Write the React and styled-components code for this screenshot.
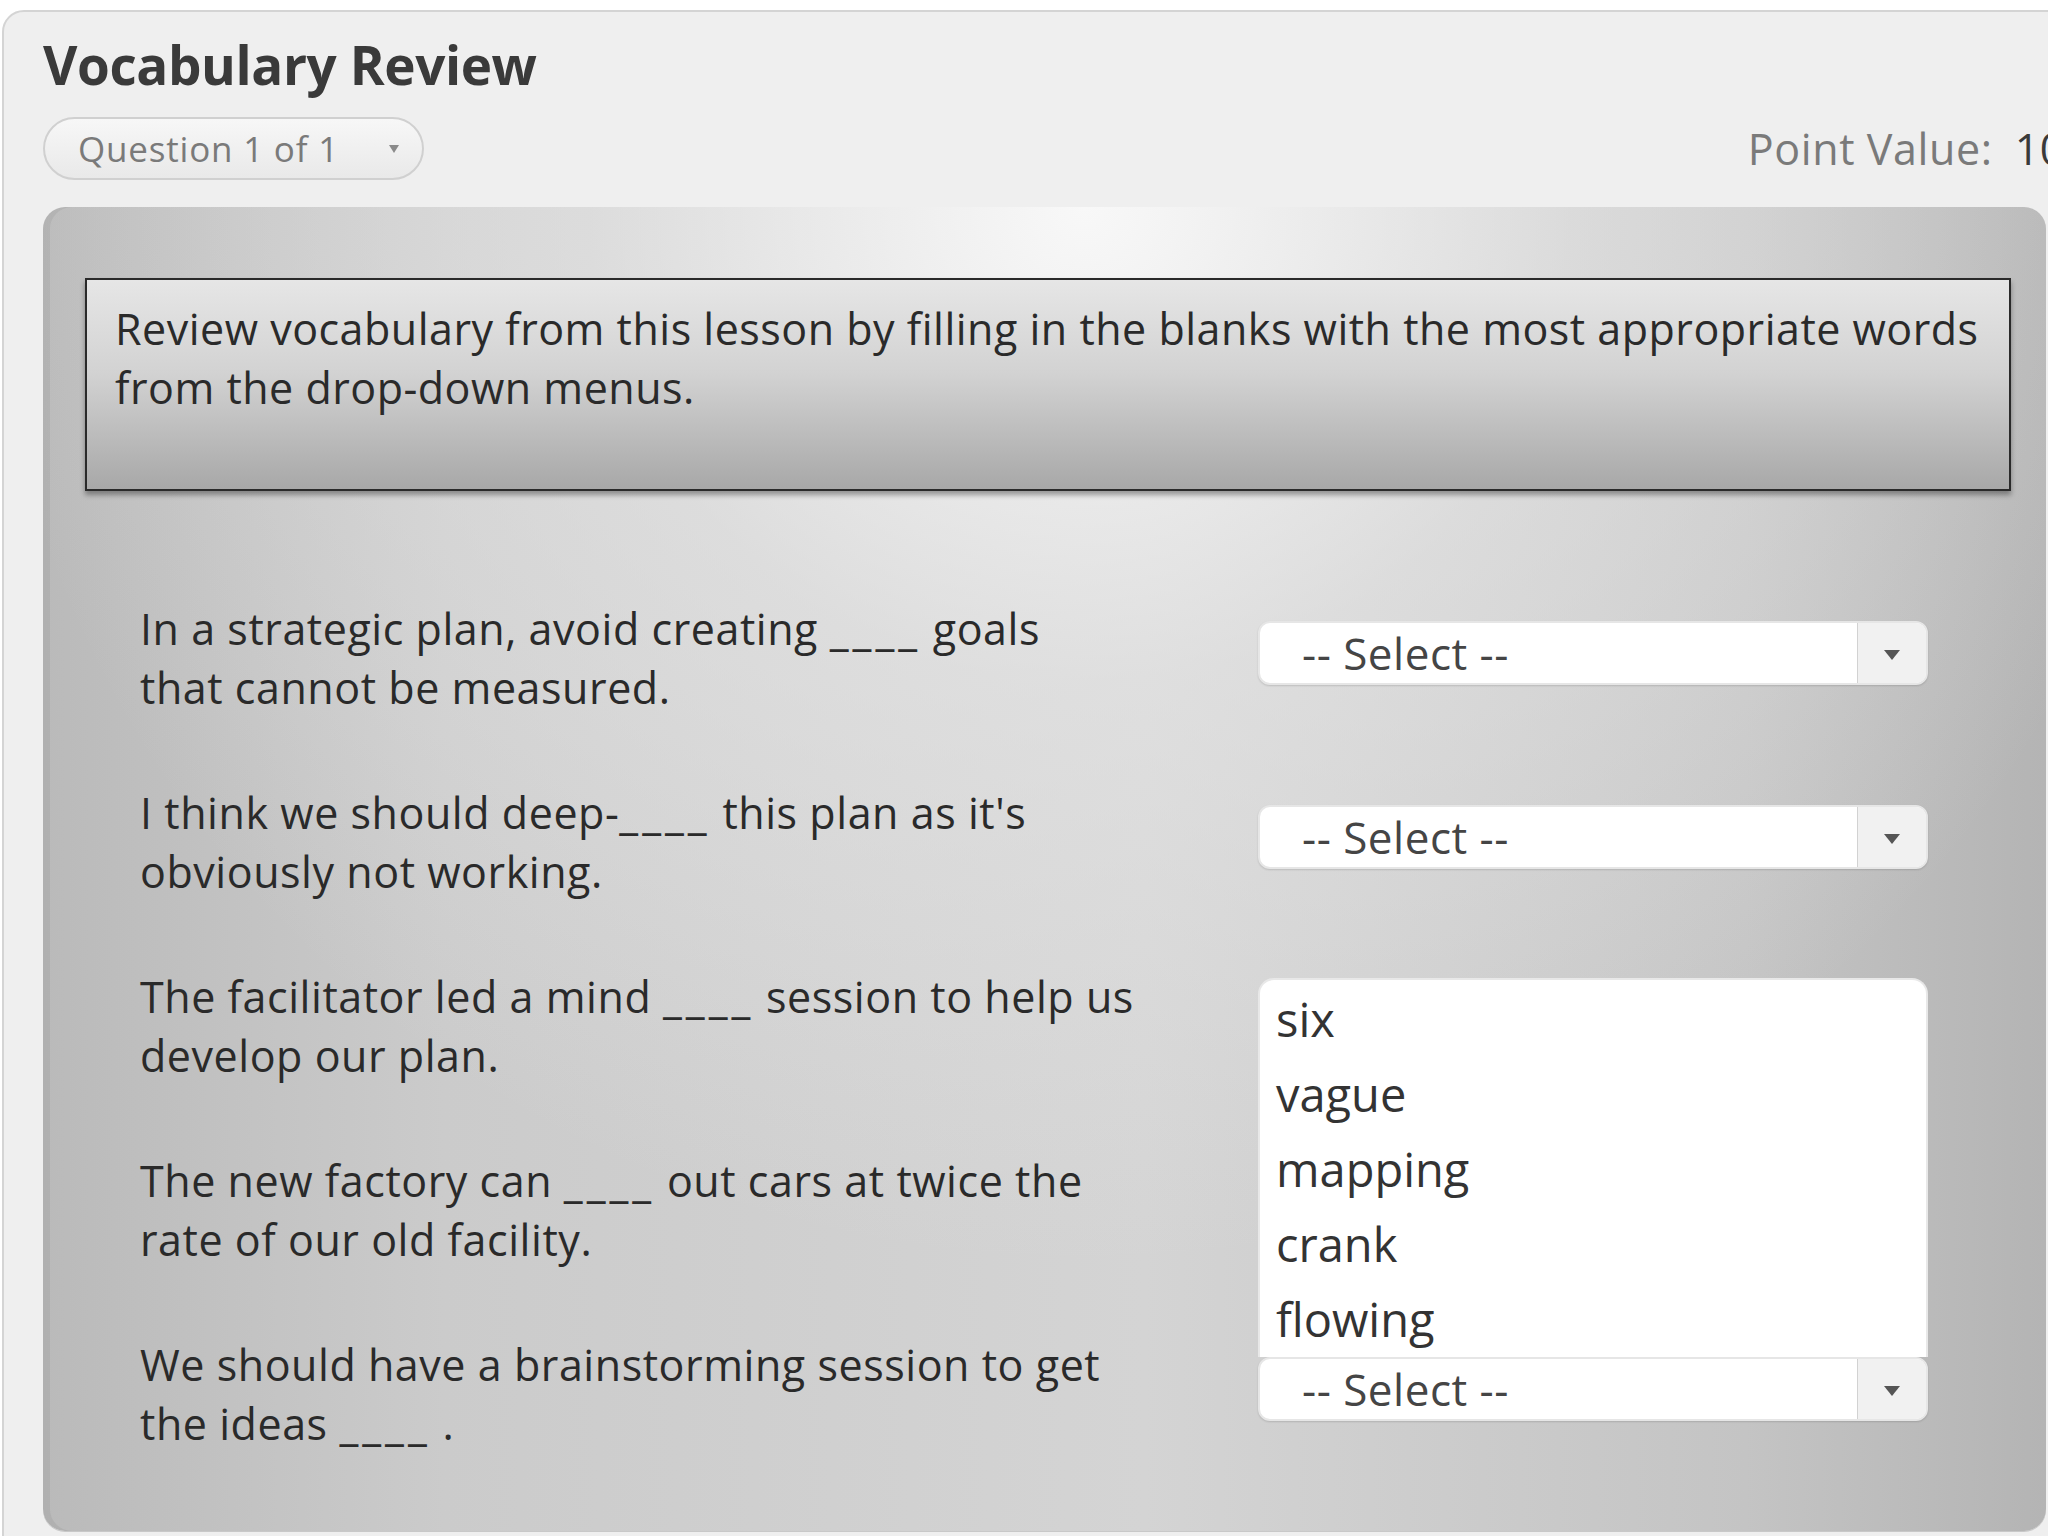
import React from "react";
import styled, { createGlobalStyle } from "styled-components";

const GlobalStyle = createGlobalStyle`
	html, body {
		margin: 0;
		padding: 0;
		background: #ffffff;
	}
	body {
		font-family: "Open Sans", Lato, sans-serif;
		color: #2e2e2e;
	}
`;

// each prompt is two lines, the blank sits between before/after
const questions = [
	[["In a strategic plan, avoid creating ", " goals"], "that cannot be measured."],
	[["I think we should deep-", " this plan as it's"], "obviously not working."],
	[["The facilitator led a mind ", " session to help us"], "develop our plan."],
	[["The new factory can ", " out cars at twice the"], "rate of our old facility."],
	[["We should have a brainstorming session to get"], ["the ideas ", " ."]]
];

const options = ["six", "vague", "mapping", "crank", "flowing"];

const Page = styled.div`
	width: 2048px;
	height: 1536px;
	overflow: hidden;
	padding-top: 10px;
	box-sizing: border-box;
`;

const Card = styled.div`
	margin-left: 2px;
	width: 2100px;
	min-height: 1600px;
	box-sizing: border-box;
	padding: 23px 0 0 39px;
	background: #efefef;
	border: 2px solid #d4d4d4;
	border-radius: 22px;
`;

const Title = styled.h1`
	margin: 0;
	font-size: 53px;
	line-height: 60px;
	font-weight: 700;
	color: #3a3a3a;
	letter-spacing: -0.4px;
`;

const HeaderRow = styled.div`
	margin-top: 22px;
	width: 2022px;
	display: flex;
	align-items: center;
	justify-content: space-between;
`;

const QuestionPill = styled.div`
	width: 381px;
	height: 63px;
	box-sizing: border-box;
	display: flex;
	align-items: center;
	padding-left: 33px;
	border: 2px solid #d0d0d0;
	border-radius: 32px;
	background: linear-gradient(#f7f7f7, #e9e9e9);
	font-size: 35px;
	letter-spacing: 0.8px;
	color: #7a7a7a;
`;

const PillCaret = styled.span`
	margin-left: 50px;
	width: 0;
	height: 0;
	border-left: 5px solid transparent;
	border-right: 5px solid transparent;
	border-top: 8px solid #8a8a8a;
`;

const PointValue = styled.div`
	font-size: 43px;
	letter-spacing: 0.6px;
	color: #7a7a7a;
	white-space: nowrap;

	b {
		margin-left: 22px;
		font-weight: 400;
		color: #3a3a3a;
	}
`;

const Panel = styled.div`
	margin-top: 27px;
	width: 2003px;
	height: 1324px;
	box-sizing: border-box;
	padding: 71px 35px 0 42px;
	border-radius: 22px;
	background:
		radial-gradient(ellipse 55% 80% at 52% 0%, rgba(250, 250, 250, 0.95) 0%, rgba(230, 230, 230, 0.6) 45%, rgba(200, 200, 200, 0) 100%),
		linear-gradient(90deg, #bababa 0%, #cbcbcb 20%, #d4d4d4 55%, #c4c4c4 85%, #b4b4b4 100%);
	box-shadow: inset 7px 0 0 rgba(0, 0, 0, 0.05), 0 1px 0 #c8c8c8;
`;

const Instructions = styled.div`
	height: 213px;
	box-sizing: border-box;
	padding: 19px 20px 0 28px;
	border: 2px solid #2a2a2a;
	background: linear-gradient(#e6e6e6 0%, #d2d2d2 45%, #a8a8a8 100%);
	box-shadow: 0 4px 5px rgba(0, 0, 0, 0.35);
	font-size: 43px;
	line-height: 59px;
	letter-spacing: 0.5px;
	color: #2a2a2a;
	white-space: nowrap;
`;

const QuestionList = styled.div`
	margin-top: 108px;
	padding-left: 55px;
	display: flex;
	flex-direction: column;
	gap: 66px;
`;

const Row = styled.div`
	display: grid;
	grid-template-columns: 1118px 670px;
	align-items: center;
`;

const Prompt = styled.div`
	font-size: 43px;
	line-height: 59px;
	letter-spacing: 0.55px;
	color: #2a2a2a;
	white-space: nowrap;
`;

const Blank = styled.span`
	letter-spacing: 4px;
`;

const SelectWrap = styled.div`
	position: relative;
	margin-bottom: 10px;
`;

const SelectBox = styled.div`
	height: 64px;
	box-sizing: border-box;
	display: flex;
	align-items: stretch;
	background: #ffffff;
	border: 2px solid #e6e6e6;
	border-radius: 12px;
	box-shadow: 0 1px 2px rgba(0, 0, 0, 0.14);
	overflow: hidden;
	visibility: ${p => (p.$covered ? "hidden" : "visible")};
`;

const SelectLabel = styled.div`
	flex: 1;
	display: flex;
	align-items: center;
	padding-left: 42px;
	font-size: 44px;
	letter-spacing: 0.5px;
	color: #454545;
`;

const ArrowCell = styled.div`
	width: 68px;
	display: flex;
	align-items: center;
	justify-content: center;
	background: #f1f1f1;
	border-left: 1px solid #d2d2d2;
`;

const Arrow = styled.span`
	width: 0;
	height: 0;
	border-left: 8px solid transparent;
	border-right: 8px solid transparent;
	border-top: 10px solid #555555;
	margin-top: 4px;
`;

const OptionList = styled.ul`
	position: absolute;
	left: 0;
	right: 0;
	bottom: 100%;
	margin: 0;
	padding: 2px 0 0 0;
	list-style: none;
	background: #ffffff;
	border: 2px solid #e8e8e8;
	border-bottom: none;
	border-radius: 16px 16px 0 0;
	z-index: 2;
`;

const Option = styled.li`
	padding-left: 16px;
	font-size: 47px;
	line-height: 75px;
	color: #333333;
`;

const Line = ({ parts }) =>
	typeof parts === "string" ? (
		parts
	) : (
		<>
			{parts[0]}
			{parts.length > 1 && <Blank>____</Blank>}
			{parts[1]}
		</>
	);

const Select = ({ open, covered }) => (
	<SelectWrap>
		{open && (
			<OptionList>
				{options.map(o => (
					<Option key={o}>{o}</Option>
				))}
			</OptionList>
		)}
		<SelectBox $covered={covered}>
			<SelectLabel>-- Select --</SelectLabel>
			<ArrowCell>
				<Arrow />
			</ArrowCell>
		</SelectBox>
	</SelectWrap>
);

const App = () => (
	<Page>
		<GlobalStyle />
		<Card>
			<Title>Vocabulary Review</Title>
			<HeaderRow>
				<QuestionPill>
					Question 1 of 1
					<PillCaret />
				</QuestionPill>
				<PointValue>
					Point Value:<b>10</b>
				</PointValue>
			</HeaderRow>
			<Panel>
				<Instructions>
					Review vocabulary from this lesson by filling in the blanks with the most appropriate words
					<br />
					from the drop-down menus.
				</Instructions>
				<QuestionList>
					{questions.map((q, i) => (
						<Row key={i}>
							<Prompt>
								<Line parts={q[0]} />
								<br />
								<Line parts={q[1]} />
							</Prompt>
							{/* the last menu is open upward and hides the two selects above it */}
							<Select open={i === 4} covered={i === 2 || i === 3} />
						</Row>
					))}
				</QuestionList>
			</Panel>
		</Card>
	</Page>
);

export default App;
